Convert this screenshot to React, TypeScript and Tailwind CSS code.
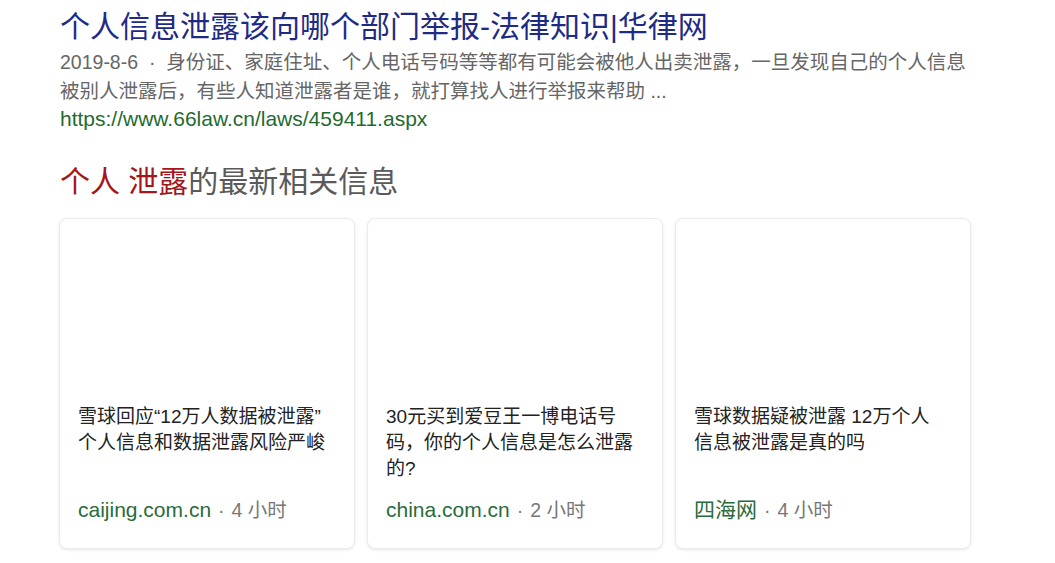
import React from 'react';

const font = "font-['Liberation_Sans','Noto_Sans_CJK_SC',sans-serif]";

const snippet =
  '2019-8-6\u00a0\u00a0·\u00a0\u00a0身份证、家庭住址、个人电话号码等等都有可能会被他人出卖泄露，一旦发现自己的个人信息被别人泄露后，有些人知道泄露者是谁，就打算找人进行举报来帮助 ...';

const cards = [
  { title: '雪球回应“12万人数据被泄露” 个人信息和数据泄露风险严峻', source: 'caijing.com.cn', time: '4 小时' },
  { title: '30元买到爱豆王一博电话号码，你的个人信息是怎么泄露的?', source: 'china.com.cn', time: '2 小时' },
  { title: '雪球数据疑被泄露 12万个人信息被泄露是真的吗', source: '四海网', time: '4 小时' },
];

const App: React.FC = () => {
  return (
    <div className={`w-[1055px] h-[563px] bg-white overflow-hidden ${font}`}>
      <div className="pl-[60px] pt-[9px]">
        <h1 className="text-[30px] leading-[36px] text-[#1f2a85]">个人信息泄露该向哪个部门举报-法律知识|华律网</h1>
        <p className="mt-[3px] w-[910px] text-[19.5px] leading-[28.5px] text-[#666666]">{snippet}</p>
        <div className="text-[21px] leading-[28.5px] text-[#1f6b30]">https://www.66law.cn/laws/459411.aspx</div>

        <h2 className="mt-[30px] text-[30px] leading-[36px] text-[#5a5a5a]">
          <span className="text-[#a3161c]">个人 泄露</span>的最新相关信息
        </h2>
      </div>

      <div className="mt-[18px] ml-[59px] flex gap-[12px]">
        {cards.map((c) => (
          <div
            key={c.source}
            className="w-[296px] h-[331px] rounded-[8px] border border-[#ececec] bg-white shadow-[0_1px_3px_rgba(0,0,0,0.10)] flex flex-col pl-[18px] pr-[28px] pt-[185px] pb-[25px]"
          >
            <div className="text-[19px] leading-[26px] text-[#222222]">{c.title}</div>
            <div className="mt-auto flex items-baseline text-[19.5px] leading-[26px] text-[#777777]">
              <span className="text-[21px] text-[#2a6b3c]">{c.source}</span>
              <span className="px-[7px]">·</span>
              <span>{c.time}</span>
            </div>
          </div>
        ))}
      </div>
    </div>
  );
};

export default App;
